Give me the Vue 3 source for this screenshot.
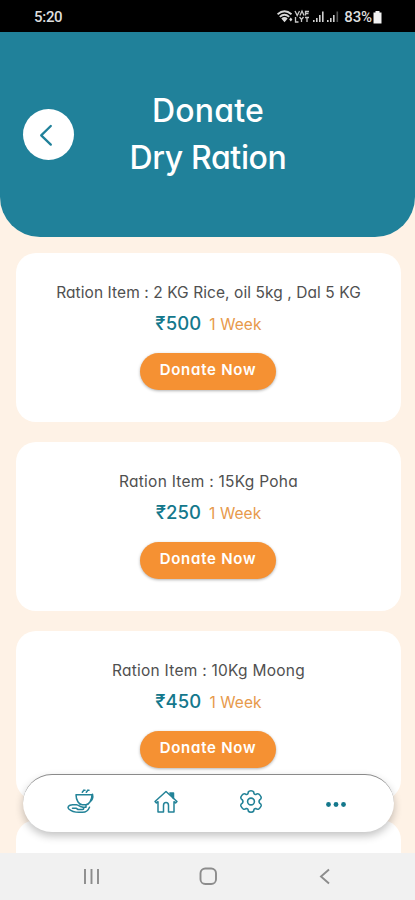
<script setup>
const rations = [
  { id: 1, text: 'Ration Item : 2 KG Rice, oil 5kg , Dal 5 KG', price: '500', fit: 'long' },
  { id: 2, text: 'Ration Item : 15Kg Poha', price: '250', fit: 'mid' },
  { id: 3, text: 'Ration Item : 10Kg Moong', price: '450', fit: 'mid' },
]
</script>

<template>
  <div class="phone">
    <div class="status">
      <span class="time">5:20</span>
      <div class="indicators">
        <svg class="signals" width="64" height="16" viewBox="0 0 64 16">
          <g fill="none" stroke="#d8d8d8" stroke-width="1.9">
            <path d="M.5 5.200Q7.500 -.8 14.500 5.200" />
            <path d="M2.800 7.900Q7.500 3.600 12.200 7.900" />
          </g>
          <path d="M4.300 9.500Q7.500 6.700 10.700 9.500L7.500 13.200Z M13.800 8.500l1.600 2-1.600 2-1.600-2z" fill="#d8d8d8" />
          <g fill="none" stroke="#c8c8c8" stroke-width="1.300">
            <path d="M18 2l2.200 4.500L22.500 2M23 6.500l2-4.500 2 4.500M28.500 6.500V2.500h3.500M28.500 4.500h3" />
            <path d="M18.500 8v5h3M22.500 8l2 2.500L26.500 8M24.500 10.500V13M28 8.500h4M30 8.500V13" />
          </g>
          <path d="M36 11h1.600v2H36zM39 9h1.600v4H39zM42 6h1.600v7H42zM45 2.500h1.600V13H45zM50 11h1.600v2H50zM53 9h1.600v4H53zM56 6h1.600v7H56z" fill="#d0d0d0" />
          <path d="M59.500 2.500h1.600V13h-1.600z" fill="#555" />
        </svg>
        <span class="percent">83%</span>
        <svg width="9" height="13" viewBox="0 0 9 13"><path d="M2.500 0h4v1.500H8.500V12.500H.5V1.500h2z" fill="#f2f2f2" /></svg>
      </div>
    </div>

    <main class="screen">
      <header class="hero">
        <button class="back" aria-label="Back">
          <svg width="50" height="50" viewBox="0 0 50 50"><path d="M27.800 17L18.200 26.300 27.800 35.600" fill="none" stroke="#20819a" stroke-width="2.300" stroke-linecap="round" stroke-linejoin="round" /></svg>
        </button>
        <h1 class="title"><span class="line1">Donate</span><span class="line2">Dry Ration</span></h1>
      </header>

      <section class="list">
        <article v-for="r in rations" :key="r.id" class="card">
          <p class="item" :class="r.fit">{{ r.text }}</p>
          <p class="cost"><span class="price">₹{{ r.price }}</span><span class="term">1 Week</span></p>
          <button class="donate">Donate Now</button>
        </article>
        <article class="card"></article>
      </section>

      <nav class="tabs">
        <svg class="tab" width="30" height="28" viewBox="1 0 30 28" fill="none" stroke="#238398" stroke-width="1.500" stroke-linecap="round" stroke-linejoin="round">
          <path d="M11 6.800H27C27 12 24 16.800 20.800 16.800H17.200C14 16.800 11 12 11 6.800ZM27.500 6.300c.9 3.200-.4 6.400-2.300 7.200M17.300 4.300l1.500-2M21.300 4.300l1.500-2M18.800 2.300h1.200M22.800 2.300h1.200" />
          <path d="M21 17.500v1.800h-3.500M11.500 16.700H7.500c-4 .2-5.500 2.500-3.700 4.300C6.500 23.500 10 24.300 14 24.300h3.500c3.500 0 5.500-1 7-5M7.500 20.200h3.500l2 1.300h4.500c1.800-.2 1.500-2.200 0-2.400-2.500 0-3.500-2-6-2.400" />
        </svg>
        <svg class="tab shifted" width="28" height="28" viewBox="0 0 28 28" fill="none" stroke="#238398" stroke-width="1.500" stroke-linejoin="round">
          <path d="M3 13.500L14 3.500 25 13.500l-1.400 1.400L22 13.700V24h-5.500v-6.500c0-2-.9-3-2.500-3s-2.500 1-2.500 3V24H6V13.700L4.400 14.900z" />
          <path d="M18 5h3.500v5.500z" fill="#238398" />
        </svg>
        <svg class="tab" width="28" height="28" viewBox="0 0 28 28" fill="none" stroke="#238398" stroke-width="1.600" stroke-linejoin="round">
          <path d="M11.300 4Q12 2.800 14 2.800T16.700 4Q16.900 6.800 18.700 6.500 20.600 5.300 21.900 6.200 23.300 7.300 24.100 9 24.500 10.800 22.900 11.600 21.200 13.500 22.900 15.400 24.500 16.200 24.100 18 23.300 19.700 21.900 20.800 20.600 21.700 18.700 20.500 16.900 20.200 16.700 23 16 24.200 14 24.200T11.300 23Q11.100 20.200 9.300 20.500 7.400 21.700 6.100 20.800 4.700 19.700 3.900 18 3.500 16.200 5.100 15.400 6.800 13.500 5.100 11.600 3.500 10.800 3.900 9 4.700 7.300 6.100 6.200 7.400 5.300 9.300 6.500 11.100 6.800 11.300 4Z" />
          <circle cx="14" cy="13.500" r="3.400" />
        </svg>
        <svg class="tab" width="28" height="28" viewBox="0 0 28 28" fill="#14788c"><circle cx="6.500" cy="16.500" r="2.400" /><circle cx="14" cy="16.500" r="2.400" /><circle cx="21.500" cy="16.500" r="2.400" /></svg>
      </nav>
    </main>

    <footer class="system">
      <svg width="24" height="24" viewBox="0 0 24 24"><path d="M6 4v15M12.500 4v15M19 4v15" stroke="#8c8c8c" stroke-width="1.900" /></svg>
      <svg width="24" height="24" viewBox="0 0 24 24"><rect x="4.500" y="3.500" width="15.500" height="15.500" rx="4.800" fill="none" stroke="#8c8c8c" stroke-width="1.900" /></svg>
      <svg width="24" height="24" viewBox="0 0 24 24"><path d="M16 4.500L8 11.500l8 7" fill="none" stroke="#8c8c8c" stroke-width="1.900" /></svg>
    </footer>
  </div>
</template>

<style>
body {
  margin: 0;
}
</style>

<style scoped>
.phone {
  width: 415px;
  height: 900px;
  display: flex;
  flex-direction: column;
  overflow: hidden;
  font-family: Inter, "Open Sans", sans-serif;
  font-feature-settings: "cv11" 1;
}
.status {
  height: 32px;
  flex: none;
  box-sizing: border-box;
  padding: 2px 33px 0 34px;
  display: flex;
  align-items: center;
  justify-content: space-between;
  background: #000;
  color: #dedede;
  font-family: Roboto, sans-serif;
  font-size: 15px;
  font-weight: 500;
}
.time {
  letter-spacing: -0.3px;
}
.indicators {
  display: flex;
  align-items: center;
}
.percent {
  margin: 0 1px 0 3px;
  letter-spacing: -0.1px;
}
.screen {
  position: relative;
  height: 821px;
  flex: none;
  overflow: hidden;
  background: #fef2e6;
}
.hero {
  height: 205px;
  box-sizing: border-box;
  display: grid;
  grid-template-columns: 50px 1fr 50px;
  padding: 0 23px;
  border-radius: 0 0 40px 40px;
  background: #20819a;
}
.back {
  width: 51px;
  height: 51px;
  margin-top: 76.500px;
  padding: 0;
  border: 0;
  border-radius: 50%;
  background: #fff;
}
.back svg {
  display: block;
}
.title {
  margin: 55px 0 0 1px;
  display: flex;
  flex-direction: column;
  align-items: center;
  color: #fff;
  font-size: 32px;
  font-weight: 500;
  line-height: 47px;
}
.line1 {
  letter-spacing: 0.2px;
}
.line2 {
  letter-spacing: -0.35px;
}
.list {
  display: flex;
  flex-direction: column;
  gap: 20.5px;
  padding: 16px 14px 0 16px;
}
.card {
  height: 168.500px;
  flex: none;
  box-sizing: border-box;
  padding-top: 27.500px;
  display: flex;
  flex-direction: column;
  align-items: center;
  border-radius: 20px;
  background: #fff;
}
.item {
  margin: 0;
  color: #505050;
  font-size: 15.500px;
  line-height: 24px;
  white-space: nowrap;
}
.long {
  letter-spacing: 0.07px;
}
.mid {
  letter-spacing: 0.25px;
}
.cost {
  margin: 4px 0 0;
  display: flex;
  align-items: baseline;
  gap: 8px;
  line-height: 29px;
}
.price {
  color: #14788c;
  font-size: 18.500px;
  font-weight: 500;
  letter-spacing: 0.1px;
}
.term {
  color: #e79a4b;
  font-size: 15.500px;
  letter-spacing: 0.1px;
}
.donate {
  width: 136px;
  height: 37px;
  margin: 14px 1px 0 0;
  padding: 0 0 3px;
  border: 0;
  border-radius: 19px;
  background: #f59133;
  box-shadow: 0 1px 3px rgba(0, 0, 0, 0.3);
  color: #fff;
  font: inherit;
  font-feature-settings: inherit;
  font-size: 15px;
  font-weight: 600;
  letter-spacing: 0.75px;
  white-space: nowrap;
}
.tabs {
  position: absolute;
  left: 23px;
  top: 742px;
  width: 371px;
  height: 58px;
  box-sizing: border-box;
  padding: 0 44px 4px 43px;
  display: flex;
  align-items: center;
  justify-content: space-between;
  border-top: 1px solid #8a8a8a;
  border-radius: 29px;
  background: #fff;
  box-shadow: 0 4px 9px rgba(0, 0, 0, 0.24);
}
.shifted {
  margin: 0 1px 0 -1px;
}
.system {
  height: 47px;
  flex: none;
  box-sizing: border-box;
  padding: 0 78px 0 79px;
  display: flex;
  align-items: center;
  justify-content: space-between;
  background: #f1f1f1;
}
</style>
